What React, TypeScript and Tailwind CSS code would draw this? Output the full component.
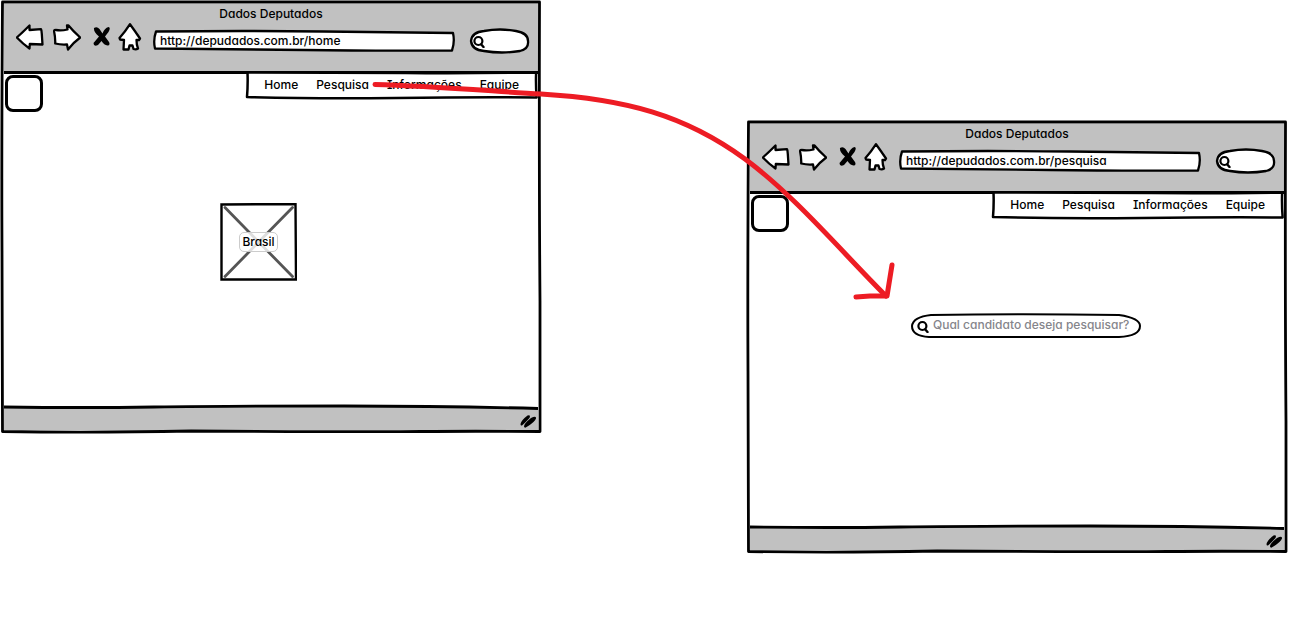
import type { ReactNode } from "react";

type OutlineProps = {
  width: number;
  height: number;
  d: string;
  fill?: string;
  stroke?: number;
};

/** Hand-drawn outline that stretches over its parent. */
function Outline({ width, height, d, fill = "none", stroke = 3 }: OutlineProps) {
  return (
    <svg
      aria-hidden="true"
      viewBox={`0 0 ${width} ${height}`}
      preserveAspectRatio="none"
      className="pointer-events-none absolute inset-0 h-full w-full overflow-visible"
    >
      <path
        d={d}
        fill={fill}
        stroke="#000"
        strokeWidth={stroke}
        strokeLinejoin="round"
        strokeLinecap="round"
        vectorEffect="non-scaling-stroke"
      />
    </svg>
  );
}

type IconButtonProps = { label: string; className: string; children: ReactNode };

function IconButton({ label, className, children }: IconButtonProps) {
  return (
    <button type="button" aria-label={label} className={`shrink-0 ${className}`}>
      {children}
    </button>
  );
}

function BackIcon() {
  return (
    <svg viewBox="0 0 28 28" className="h-7 w-7" fill="#fff" stroke="#000" strokeWidth="2.300" strokeLinejoin="round">
      <path d="M0.800 13.500 Q7 8 13.500 1.500 L13.500 6 L25 5.200 Q25.500 6 25.800 10 L26.500 20.500 L13.800 20 L13.500 24.500 Q7 20 0.800 13.500Z" />
    </svg>
  );
}

function ForwardIcon() {
  return (
    <svg viewBox="0 0 28 28" className="h-7 w-7" fill="#fff" stroke="#000" strokeWidth="2.300" strokeLinejoin="round">
      <path d="M1 7 Q1.500 5.500 3 6 Q8 7 14.500 5.500 L14 1.500 L15.500 1.500 Q20 7 27.200 13.500 Q21 18 15 25.500 L14 20.500 Q8 21 2.200 19.500 Q2.500 14 1 7Z" />
    </svg>
  );
}

function StopIcon() {
  return (
    <svg viewBox="0 0 18 22" className="h-[22px] w-[18px]" fill="#000">
      <path d="M1 1 Q4 -1 6.500 2 L9.500 6.500 Q11.500 1 15.500 0 Q18 0.500 15.500 5 L12 9.500 L16 15 Q17.500 18.500 14.500 18.500 Q11 18 8.500 14 L5 18 Q0.500 20 0.500 16 L6 9.500 Q0.500 5 1 1Z" />
    </svg>
  );
}

function HomeIcon() {
  return (
    <svg viewBox="0 0 24 30" className="h-[30px] w-6" fill="#fff" stroke="#000" strokeWidth="2.300" strokeLinejoin="round">
      <path d="M12 1.200 Q17 8 22 15.500 L21 17 L18.500 17 Q18.500 22 20 25.500 Q18 27 15.500 26 L14.500 22.500 L11.500 22.500 L10.500 26.500 L5.500 26.500 L6 17 L2 16.500 L1.500 15 Q7 9 12 1.200Z" />
    </svg>
  );
}

function MagnifierIcon() {
  return (
    <svg aria-hidden="true" viewBox="0 0 12 13" className="h-[13px] w-3 shrink-0" fill="none" stroke="#000" strokeLinecap="round">
      <circle cx="5.400" cy="6" r="4" strokeWidth="2.200" />
      <path d="M8.300 9.500 L10.500 12" strokeWidth="2.400" />
    </svg>
  );
}

type BrowserProps = { id: string; url: string; className: string; children: ReactNode };

const links = ["Home", "Pesquisa", "Informações", "Equipe"];

function Browser({ id, url, className, children }: BrowserProps) {
  return (
    <section className={`relative flex min-w-0 flex-col p-[3px] ${className}`}>
      <header className="border-b-[3px] border-black bg-[#c1c1c1] pb-[19px]">
        <h2 className="text-center leading-5">Dados Deputados</h2>
        <div className="flex h-7 items-center pr-[9px] pl-3">
          <IconButton label="Voltar" className="">
            <BackIcon />
          </IconButton>
          <IconButton label="Avançar" className="ml-[9px]">
            <ForwardIcon />
          </IconButton>
          <IconButton label="Parar" className="ml-3">
            <StopIcon />
          </IconButton>
          <IconButton label="Página inicial" className="ml-[7px]">
            <HomeIcon />
          </IconButton>
          <div className="relative ml-3 mt-1.5 h-[22px] min-w-0 flex-1">
            <Outline
              width={300}
              height={22}
              fill="#fff"
              stroke={2.3}
              d="M2 1.500 Q90 0.500 170 1.500 T299 3 Q301 12 298 20.500 Q220 21 150 20 T1 18.500 Q-1 10 2 1.500Z"
            />
            <input
              id={`${id}-url`}
              aria-label="Endereço"
              defaultValue={url}
              className="relative block h-full w-full bg-transparent pb-0.5 pl-1.5 outline-none"
            />
          </div>
          <div className="relative ml-4 mt-1.5 flex h-6 w-[59px] shrink-0 items-center pl-[3px]">
            <Outline
              width={59}
              height={24}
              fill="#fff"
              stroke={2.3}
              d="M1 12 Q2 3 14 2 Q30 -1 46 2 Q58 4 58 12 Q59 20 50 22 Q32 25 14 22 Q2 21 1 12Z"
            />
            <span className="relative">
              <MagnifierIcon />
            </span>
            <input id={`${id}-busca`} aria-label="Buscar" className="relative h-full w-0 min-w-0 flex-1 bg-transparent outline-none" />
          </div>
        </div>
      </header>

      <main className="min-h-[331px] flex-1">
        <div className="flex items-start justify-between">
          <a
            href="#inicio"
            aria-label="Início"
            className="mt-px ml-px h-[37px] w-[38px] shrink-0 rounded-lg border-[3px] border-black bg-white"
          />
          <nav className="relative -mt-[3px] flex h-7 items-center gap-[18px] pr-[19px] pl-[18px]">
            <Outline
              width={292}
              height={28}
              fill="#fff"
              stroke={2.5}
              d="M1.500 1.500 Q100 1.500 160 2 T290.500 1.500 Q290 14 291 26.500 Q230 26 150 27 T1 26 Q2 14 1.500 1.500Z"
            />
            {links.map((link) => (
              <a key={link} href={`#${link.toLowerCase()}`} className="relative">
                {link}
              </a>
            ))}
          </nav>
        </div>
        {children}
      </main>

      <footer className="relative flex h-[25px] items-center justify-end pt-2 pr-0.5">
        <svg
          aria-hidden="true"
          viewBox="0 0 534 25"
          preserveAspectRatio="none"
          className="absolute inset-0 h-full w-full overflow-visible"
        >
          <path d="M0 2 Q80 3 150 2 T340 1 Q440 1 534 3.500 L534 25 L0 25Z" fill="#c1c1c1" />
          <path d="M0 2 Q80 3 150 2 T340 1 Q440 1 534 3.500" fill="none" stroke="#000" strokeWidth="2.800" />
        </svg>
        <svg aria-hidden="true" viewBox="0 0 16 13" className="relative h-[13px] w-4" fill="#000">
          <path d="M0.500 9 Q1 5.500 7.500 0.500 Q11 -0.500 9.500 3 Q5 8 2 10.500 Q0.500 11 0.500 9Z" />
          <path d="M4 11.500 Q4 8.500 11 3 Q16.500 0.500 16 3.500 Q15 7 6.500 12 Q4.500 13.500 4 11.500Z" />
        </svg>
      </footer>

      <Outline
        width={540}
        height={432}
        stroke={2.8}
        d="M1.500 1 L538.500 1 Q538 180 539 300 L539 430.500 Q470 430 420 430.500 T190 430 Q90 432 1.500 430.500 Q1.500 350 1 250 T1.500 1Z"
      />
    </section>
  );
}

function PicturePlaceholder() {
  return (
    <figure className="relative mt-[91px] ml-[216px] flex h-[78px] w-[77px] items-center justify-center">
      <svg aria-hidden="true" viewBox="0 0 77 78" className="absolute inset-0 h-full w-full" fill="none">
        <path d="M1.500 1.500 L75.500 1 L76 76.500 L1.500 76.500Z" stroke="#000" strokeWidth="2.400" />
        <path d="M5 4.500 L72.500 73.500 M72.500 4.500 L5 73.500" stroke="#555" strokeWidth="2.800" strokeLinecap="round" />
      </svg>
      <figcaption className="relative rounded-[5px] border border-[#ccc] bg-white/80 px-0.5 leading-[18px]">Brasil</figcaption>
    </figure>
  );
}

function CandidateSearch() {
  return (
    <form className="relative mt-[82px] ml-[161px] flex h-6 w-[230px] items-center pl-1.5">
      <Outline
        width={230}
        height={24}
        fill="#fff"
        stroke={2}
        d="M20 1 Q110 -0.500 208 1 Q229 4 229 12 Q229 22 208 23 L18 23 Q1 22 1 12 Q2 3 20 1Z"
      />
      <label htmlFor="candidato" className="relative">
        <MagnifierIcon />
      </label>
      <input
        id="candidato"
        aria-label="Candidato"
        placeholder="Qual candidato deseja pesquisar?"
        className="relative h-full min-w-0 flex-1 bg-transparent pb-1 pl-1 placeholder-[#85858b] outline-none"
      />
    </form>
  );
}

export default function App() {
  return (
    <div className="relative grid min-h-screen grid-cols-[540fr_206fr_540fr] items-start bg-white pt-px pr-[11px] pl-px font-[Inter,sans-serif] text-[12px] font-medium text-black [font-feature-settings:'cv11','cv08']">
      <Browser id="home" url="http://depudados.com.br/home" className="col-start-1">
        <PicturePlaceholder />
      </Browser>
      <Browser id="pesquisa" url="http://depudados.com.br/pesquisa" className="col-start-3 mt-[120px]">
        <CandidateSearch />
      </Browser>

      <svg
        aria-hidden="true"
        viewBox="0 0 1298 623"
        preserveAspectRatio="none"
        className="pointer-events-none absolute top-0 left-0 h-[623px] w-full"
        fill="none"
        stroke="#ed1c24"
        strokeWidth="5"
        strokeLinecap="round"
        strokeLinejoin="round"
      >
        <path d="M375 84.500 C430 86 490 91 541 94 C625 99 685 115 745 159 C795 196 840 250 886 296" />
        <path d="M892 265 L887 296 L870 296 L856 297" />
      </svg>
    </div>
  );
}
